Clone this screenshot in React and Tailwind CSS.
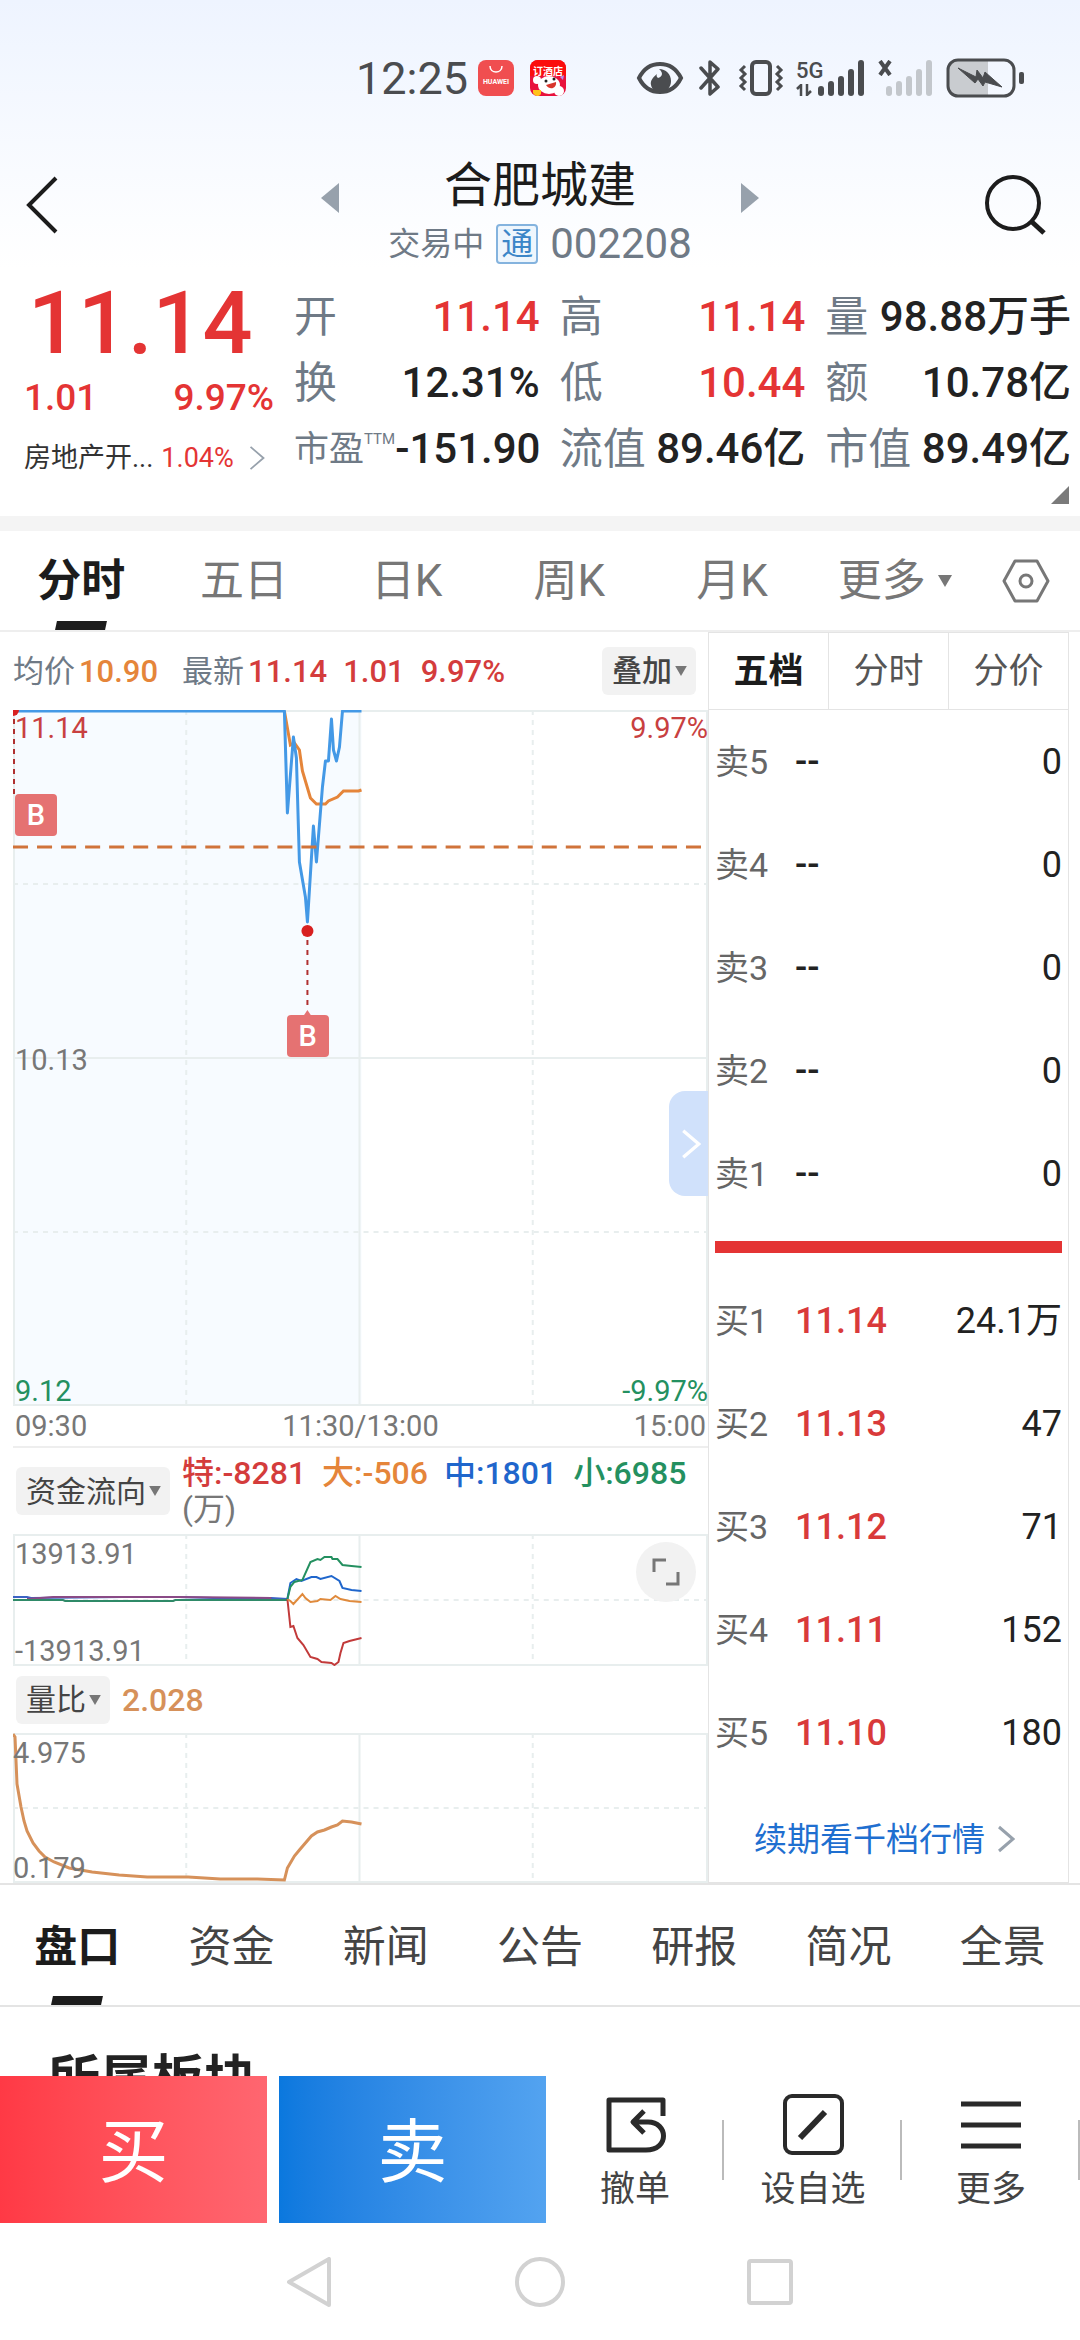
// src/App.jsx

import React, { useState } from 'react';

const RED = 'text-[#e43434]';
const INK = 'text-[#222222]';

const QUOTES = [
  { label: '开', value: '11.14', color: RED },
  { label: '高', value: '11.14', color: RED },
  { label: '量', value: '98.88万手', color: INK },
  { label: '换', value: '12.31%', color: INK },
  { label: '低', value: '10.44', color: RED },
  { label: '额', value: '10.78亿', color: INK },
  { label: '市盈', sup: 'TTM', value: '-151.90', color: INK },
  { label: '流值', value: '89.46亿', color: INK },
  { label: '市值', value: '89.49亿', color: INK },
];

const SELLS = [5, 4, 3, 2, 1].map((n) => ({ label: `卖${n}`, price: '--', volume: '0' }));

const BUYS = [
  { label: '买1', price: '11.14', volume: '24.1万' },
  { label: '买2', price: '11.13', volume: '47' },
  { label: '买3', price: '11.12', volume: '71' },
  { label: '买4', price: '11.11', volume: '152' },
  { label: '买5', price: '11.10', volume: '180' },
];

const PERIODS = ['分时', '五日', '日K', '周K', '月K'];
const BOOK_TABS = ['五档', '分时', '分价'];
const INFO_TABS = ['盘口', '资金', '新闻', '公告', '研报', '简况', '全景'];

const PRICE_LINE =
  '0,1 271,1 274,103 280,27 283,48 286,152 292,187 294,212 300,116 303,152 309,77 312,51 315,51 318,9 320,40 323,51 326,37 329,1 348,1';
const AVG_LINE =
  '271,1 277,35 281,33 286,40 289,61 297,88 303,94 312,94 315,91 324,87 330,81 345,81 348,80';

const FLOW_LINES = [
  { color: '#3b62c4', points: '0,63 14,63 18,64 110,63 165,63 200,64 258,64 274,65' },
  { color: '#8a4a86', points: '14,65 40,63 165,63 258,64' },
  { color: '#2f8a68', points: '0,66 50,66 52,67 160,67 162,66 274,66' },
  { color: '#c23a3a', points: '274,65 277,93 280,92 284,104 290,111 297,123 304,125 308,128 318,129 321,131 325,128 327,119 330,109 336,107 348,104' },
  { color: '#e08a3c', points: '274,65 277,67 280,70 289,60 292,64 297,68 304,67 307,65 317,66 322,62 327,65 336,67 348,68' },
  { color: '#1f66cc', points: '274,65 277,49 283,45 288,47 298,43 303,43 307,45 318,42 326,47 329,54 338,56 348,57' },
  { color: '#249060', points: '274,65 277,53 281,48 289,46 297,28 304,25 307,26 311,23 318,23 319,25 324,25 329,31 338,32 348,33' },
];

const RATIO_LINE =
  '0,1 2,4 4,51 8,74 11,88 14,98 20,110 26,118 32,124 41,129 56,135 79,139 106,142 134,144 159,144 175,144 207,146 244,146 271,147 274,135 281,123 286,117 298,103 304,99 311,97 318,94 324,92 329,88 338,89 348,91';

function Caret({ className }) {
  return (
    <svg viewBox="0 0 14 12" className={className} aria-hidden="true">
      <path d="M0 0h14L7 12z" fill="currentColor" />
    </svg>
  );
}

function Chevron({ className, width = 2 }) {
  return (
    <svg viewBox="0 0 18 26" fill="none" stroke="currentColor" strokeWidth={width} className={className} aria-hidden="true">
      <path d="M2 1l14 12L2 25" />
    </svg>
  );
}

function Picker({ label, options }) {
  return (
    <label className="relative flex h-12 shrink-0 items-center rounded-md bg-[#f2f2f2] text-[#444444]">
      <select aria-label={label} className="h-full appearance-none bg-transparent pl-2.5 pr-6 text-[30px]">
        {options.map((o) => (
          <option key={o}>{o}</option>
        ))}
      </select>
      <Caret className="pointer-events-none absolute right-2 h-2.5 w-3.5 text-[#777777]" />
    </label>
  );
}

function Signal({ className }) {
  return (
    <svg viewBox="0 0 46 36" className={className} fill="currentColor" aria-hidden="true">
      <rect x="0" y="26" width="6" height="10" rx="3" />
      <rect x="10" y="21" width="6" height="15" rx="3" />
      <rect x="20" y="16" width="6" height="20" rx="3" />
      <rect x="30" y="9" width="6" height="27" rx="3" />
      <rect x="40" y="0" width="6" height="36" rx="3" />
    </svg>
  );
}

function StatusBar() {
  return (
    <div className="flex h-[156px] items-center justify-end pr-[54px] text-[#4a4c4f]">
      <span className="mr-2.5 text-[45px] leading-none">12:25</span>
      <svg viewBox="0 0 36 36" className="mr-4 size-9" aria-hidden="true">
        <rect width="36" height="36" rx="8" fill="#f04e50" />
        <path d="M12 6c0 8 12 8 12 0" fill="none" stroke="#fff" strokeWidth="1.5" />
        <text x="18" y="24" textAnchor="middle" fontSize="7" fontWeight="700" fill="#fff">HUAWEI</text>
      </svg>
      <svg viewBox="0 0 36 36" className="mr-[70px] size-9" aria-hidden="true">
        <rect width="36" height="36" rx="8" fill="#e8123c" />
        <path d="M0 8a8 8 0 018-8h20a8 8 0 018 8v8H0z" fill="#fb0d0d" />
        <text x="18" y="15" textAnchor="middle" fontSize="10" fontWeight="700" fill="#fff">订酒店</text>
        <ellipse cx="19" cy="25" rx="11" ry="9" fill="#fff" />
        <circle cx="7" cy="20" r="4" fill="#fff" />
        <circle cx="29" cy="31" r="5" fill="#fff" />
        <path d="M16 25l10-3c1 6-6 9-10 3z" fill="#d9352c" />
        <circle cx="16" cy="21" r="1.5" fill="#222" />
        <circle cx="24" cy="19" r="1.5" fill="#222" />
        <path d="M3 30h8v4a4 4 0 01-4 2 6 6 0 01-4-3z" fill="#ffc21a" />
        <path d="M30 17l4-2-1 5z" fill="#b58cf0" />
      </svg>
      <svg viewBox="0 0 48 34" className="mr-3.5 h-[34px] w-12" fill="none" aria-hidden="true">
        <path d="M3 17C8 7 15 3 24 3s16 4 21 14c-5 10-12 14-21 14S8 27 3 17z" stroke="currentColor" strokeWidth="4" />
        <path d="M23 8c5 4 3 8-1 9-1-1-2-2-1-4-4 3-7 7-6 11 1 5 5 7 10 7 6 0 10-5 10-11 0-7-5-12-12-12z" fill="currentColor" />
      </svg>
      <svg viewBox="0 0 24 36" className="mr-4 h-9 w-6" fill="none" stroke="currentColor" strokeWidth="3.5" strokeLinejoin="round" strokeLinecap="round" aria-hidden="true">
        <path d="M3 8l17 19-8 7V2l8 7L3 28" />
      </svg>
      <svg viewBox="0 0 46 36" className="mr-3 h-9 w-[46px]" fill="none" stroke="currentColor" aria-hidden="true">
        <rect x="14" y="2" width="18" height="32" rx="4" strokeWidth="4" />
        <path d="M7 6L3 10l4 4-4 4 4 4-4 4 4 4M39 6l4 4-4 4 4 4-4 4 4 4-4 4" strokeWidth="3" />
      </svg>
      <span className="relative mr-3.5 flex h-9 w-[68px] justify-end">
        <span className="absolute left-0 top-0 text-[22px] font-medium leading-none">5G</span>
        <svg viewBox="0 0 16 12" className="absolute bottom-0 left-0 h-3 w-4" fill="none" stroke="currentColor" strokeWidth="2.5" aria-hidden="true">
          <path d="M1 5l4-4v11M11 0v11l4-4" />
        </svg>
        <Signal className="h-9 w-[46px]" />
      </span>
      <span className="relative mr-3.5 flex h-9 w-[54px] justify-end">
        <svg viewBox="0 0 14 16" className="absolute left-0 top-0 h-4 w-3.5" stroke="currentColor" strokeWidth="4" aria-hidden="true">
          <path d="M2 1l10 14M12 1L2 15" />
        </svg>
        <Signal className="h-9 w-[46px] text-[#c3c7cc]" />
      </span>
      <svg viewBox="0 0 80 40" className="h-10 w-20" aria-hidden="true">
        <path d="M12 3h30v34H12a9 9 0 01-9-9V12a9 9 0 019-9z" fill="#c9ccd0" />
        <rect x="2" y="2" width="66" height="36" rx="10" fill="none" stroke="currentColor" strokeWidth="3" />
        <rect x="73" y="14" width="5" height="12" rx="2" fill="currentColor" />
        <path d="M12 10l18 9 1-7 6 8 2-6 17 15-17-5-2 4-5-7-3 4z" fill="currentColor" stroke="currentColor" strokeLinejoin="round" />
      </svg>
    </div>
  );
}

function Header() {
  return (
    <header className="grid h-28 grid-cols-[1fr_438px_1fr] items-start px-6">
      <button aria-label="返回" className="mt-5 justify-self-start text-[#1c1c1c]">
        <svg viewBox="0 0 34 58" className="h-[58px] w-[34px]" fill="none" stroke="currentColor" strokeWidth="4" aria-hidden="true">
          <path d="M32 2L5 29l27 27" />
        </svg>
      </button>
      <div className="flex items-start justify-between">
        <button aria-label="上一只" className="mt-[27px] text-[#97a1ac]">
          <svg viewBox="0 0 18 30" className="h-[30px] w-[18px]" fill="currentColor" aria-hidden="true"><path d="M18 0v30L0 15z" /></svg>
        </button>
        <div className="flex flex-col items-center">
          <h1 className="h-[66px] text-[48px] leading-[60px] text-[#1c1c1c]">合肥城建</h1>
          <p className="flex h-11 items-center gap-3 leading-none text-[#6f7a86]">
            <span className="text-[32px]">交易中</span>
            <span className="flex h-10 w-[42px] items-center justify-center rounded-sm border-2 border-[#84b3de] bg-[#eef6fd] text-[32px] text-[#3c86c8]">通</span>
            <span className="text-[42px]">002208</span>
          </p>
        </div>
        <button aria-label="下一只" className="mt-[27px] text-[#97a1ac]">
          <svg viewBox="0 0 18 30" className="h-[30px] w-[18px]" fill="currentColor" aria-hidden="true"><path d="M0 0v30l18-15z" /></svg>
        </button>
      </div>
      <button aria-label="搜索" className="mr-2.5 mt-[18px] justify-self-end text-[#1c1c1c]">
        <svg viewBox="0 0 62 62" className="size-[62px]" fill="none" stroke="currentColor" strokeWidth="4" aria-hidden="true">
          <circle cx="29" cy="29" r="26" />
          <path d="M48 48l12 11" strokeWidth="5" />
        </svg>
      </button>
    </header>
  );
}

function Quote() {
  return (
    <section className="relative flex h-[248px] pr-[9px] pt-4">
      <div className="w-[294px] shrink-0 pl-6 leading-none">
        <p className={`flex h-[78px] items-center pl-1 text-[88px] font-medium ${RED}`}>11.14</p>
        <p className={`flex h-[70px] items-center justify-between pr-5 text-[37px] font-medium ${RED}`}>
          <span>1.01</span>
          <span>9.97%</span>
        </p>
        <a href="#sector" className="flex h-[52px] items-center gap-2 pr-7 text-[27px] text-[#333333]">
          <span>房地产开...</span>
          <span className={RED}>1.04%</span>
          <Chevron className="ml-auto h-6 w-[18px] text-[#97a1ac]" />
        </a>
      </div>
      <dl className="grid flex-1 grid-cols-3 content-start gap-x-5">
        {QUOTES.map((q) => (
          <div key={q.label} className="flex h-[66px] items-center justify-between whitespace-nowrap leading-none">
            <dt className={q.sup ? 'flex text-[35px] text-[#6f7a86]' : 'text-[43px] text-[#6f7a86]'}>
              {q.label}
              {q.sup && <sup className="top-0 self-start text-[15px] leading-none">{q.sup}</sup>}
            </dt>
            <dd className={`text-[42px] font-medium ${q.color}`}>{q.value}</dd>
          </div>
        ))}
      </dl>
      <svg viewBox="0 0 18 18" className="absolute bottom-3 right-[11px] size-[18px]" aria-hidden="true">
        <path d="M18 0v18H0z" fill="#7a7a7a" />
      </svg>
    </section>
  );
}

function Underline() {
  return <span className="absolute bottom-0 h-[9px] w-[50px] -skew-x-12 bg-[#1c1c1c]" />;
}

function PeriodTabs() {
  const [active, setActive] = useState('分时');
  return (
    <nav className="flex h-[101px] border-b-2 border-t border-b-[#eeeeee] border-t-white text-[44px] leading-none text-[#777777]">
      {PERIODS.map((p) => (
        <button
          key={p}
          onClick={() => setActive(p)}
          className={`relative flex flex-1 items-center justify-center ${p === active ? 'font-bold text-[#1c1c1c]' : ''}`}
        >
          {p}
          {p === active && <Underline />}
        </button>
      ))}
      <button className="flex flex-1 items-center justify-center gap-3 pr-2">
        更多
        <Caret className="h-3 w-3.5" />
      </button>
      <button aria-label="设置" className="flex w-24 items-center pl-[18px]">
        <svg viewBox="0 0 48 44" className="h-11 w-12" fill="none" stroke="currentColor" strokeWidth="3" aria-hidden="true">
          <path d="M13 2h22l11 20-11 20H13L2 22z" strokeLinejoin="round" />
          <circle cx="24" cy="22" r="6" />
        </svg>
      </button>
    </nav>
  );
}

// Quarter grid shared by the three charts
function Grid({ height, rows }) {
  return (
    <g stroke="#e8eeee" strokeWidth="2" fill="none">
      <path d={`M0 1H694M0 ${height - 1}H694M1 0V${height}M346 0V${height}M693 0V${height}`} />
      <path d={`M173 0V${height}M519 0V${height}`} strokeDasharray="5 5" />
      {rows.map((y) => (
        <path key={y} d={`M0 ${y}H694`} strokeDasharray="5 5" />
      ))}
    </g>
  );
}

function PriceChart() {
  return (
    <div className="relative h-[696px] text-[29px] leading-none">
      <svg viewBox="0 0 694 696" preserveAspectRatio="none" className="size-full" role="img" aria-label="分时走势">
        <polygon points={`${PRICE_LINE} 348,696 0,696`} fill="#f7fbff" />
        <Grid height={696} rows={[174, 522]} />
        <path d="M0 348H694" stroke="#e8eeee" strokeWidth="2" />
        <polyline points={AVG_LINE} fill="none" stroke="#e5853a" strokeWidth="3" />
        <polyline points={PRICE_LINE} fill="none" stroke="#4499e6" strokeWidth="3" strokeLinejoin="round" />
        <path d="M0 137H694" stroke="#d0733a" strokeWidth="3" strokeDasharray="15 9" />
        <path d="M0 0h6a6 6 0 01-6 6z" fill="#d82020" />
        <path d="M1 9V84M294 230V296" stroke="#b03030" strokeWidth="2" strokeDasharray="5 5" />
        <circle cx="294" cy="221" r="6" fill="#d82020" />
        <path d="M290 306l4-6 4 6z" fill="#e57272" />
      </svg>
      <span className="absolute left-0.5 top-1 text-[#c84040]">11.14</span>
      <span className="absolute right-0 top-1 text-[#c84040]">9.97%</span>
      <span className="absolute left-0.5 top-[336px] text-[#777777]">10.13</span>
      <span className="absolute bottom-0 left-0.5 text-[#249060]">9.12</span>
      <span className="absolute bottom-0 right-0 text-[#249060]">-9.97%</span>
      <span className="absolute left-0.5 top-[84px] flex size-[42px] items-center justify-center rounded bg-[#e57272] font-medium text-white">B</span>
      <span className="absolute left-[42.4%] top-[305px] flex size-[42px] -translate-x-1/2 items-center justify-center rounded bg-[#e57272] font-medium text-white">B</span>
      <button aria-label="收起盘口" className="absolute right-0 top-[381px] flex h-[105px] w-[39px] items-center justify-center rounded-l-2xl bg-[#d0e1fb] text-white">
        <Chevron className="ml-1 h-8 w-5" width={3} />
      </button>
    </div>
  );
}

function Charts() {
  return (
    <div className="min-w-0 flex-1 pl-[13px]">
      <div className="flex h-[78px] items-center pr-3 text-[31px] font-medium leading-none text-[#d43c3c]">
        <span className="font-normal text-[#6f7a86]">均价</span>
        <span className="ml-1 mr-6 text-[#e5853a]">10.90</span>
        <span className="font-normal text-[#6f7a86]">最新</span>
        <span className="ml-1 mr-4">11.14</span>
        <span className="mr-4">1.01</span>
        <span className="mr-auto">9.97%</span>
        <Picker label="叠加" options={['叠加']} />
      </div>
      <PriceChart />
      <div className="grid h-[42px] grid-cols-3 items-center border-b-2 border-[#eeeeee] px-0.5 text-[29px] leading-none text-[#777777]">
        <span>09:30</span>
        <span className="text-center">11:30/13:00</span>
        <span className="text-right">15:00</span>
      </div>

      <div className="flex h-[86px] items-center gap-3 pl-[3px]">
        <Picker label="指标" options={['资金流向']} />
        <p className="flex flex-wrap gap-x-4 whitespace-nowrap text-[32px] font-medium leading-9">
          <span className="text-[#d43c3c]">特:-8281</span>
          <span className="text-[#e5853a]">大:-506</span>
          <span className="text-[#1f66cc]">中:1801</span>
          <span className="text-[#249060]">小:6985</span>
          <span className="font-normal text-[#777777]">(万)</span>
        </p>
      </div>
      <div className="relative h-[132px] text-[29px] leading-none text-[#777777]">
        <svg viewBox="0 0 694 132" preserveAspectRatio="none" className="size-full" role="img" aria-label="资金流向">
          <Grid height={132} rows={[66]} />
          {FLOW_LINES.map((l) => (
            <polyline key={l.points} points={l.points} fill="none" stroke={l.color} strokeWidth="2" />
          ))}
        </svg>
        <span className="absolute left-0.5 top-1.5">13913.91</span>
        <span className="absolute bottom-0 left-0.5">-13913.91</span>
        <button aria-label="全屏" className="absolute right-3 top-2 flex size-[60px] items-center justify-center rounded-full bg-[#f2f2f2]">
          <svg viewBox="0 0 28 28" className="size-7" fill="none" stroke="currentColor" strokeWidth="3" aria-hidden="true">
            <path d="M2 14V2h12M26 14v12H14" />
          </svg>
        </button>
      </div>

      <div className="flex h-[67px] items-center gap-3 pl-[3px]">
        <Picker label="副图指标" options={['量比']} />
        <span className="text-[32px] font-medium leading-none text-[#d6915a]">2.028</span>
      </div>
      <div className="relative h-[150px] text-[29px] leading-none text-[#777777]">
        <svg viewBox="0 0 694 150" preserveAspectRatio="none" className="size-full" role="img" aria-label="量比">
          <Grid height={150} rows={[75]} />
          <polyline points={RATIO_LINE} fill="none" stroke="#d6915a" strokeWidth="3" />
        </svg>
        <span className="absolute left-0 top-1.5">4.975</span>
        <span className="absolute bottom-0 left-0">0.179</span>
      </div>
    </div>
  );
}

function Levels({ label, rows, priceClass }) {
  return (
    <table aria-label={label} className="w-full leading-none">
      <tbody>
        {rows.map((r) => (
          <tr key={r.label} className="h-[103px]">
            <th scope="row" className="w-20 text-left text-[34px] font-normal text-[#666666]">{r.label}</th>
            <td className={`text-[36px] font-medium ${priceClass}`}>{r.price}</td>
            <td className="text-right text-[36px] text-[#222222]">{r.volume}</td>
          </tr>
        ))}
      </tbody>
    </table>
  );
}

function OrderBook() {
  const [tab, setTab] = useState(0);
  return (
    <aside className="mr-[11px] w-[361px] shrink-0 border border-[#e4e4e4]">
      <div className="flex h-[77px] border-b border-[#e4e4e4] text-[35px] leading-none text-[#555555]">
        {BOOK_TABS.map((t, i) => (
          <button
            key={t}
            onClick={() => setTab(i)}
            className={`flex-1 border-r border-[#e4e4e4] last:border-r-0 ${i === tab ? 'font-bold text-[#1c1c1c]' : ''}`}
          >
            {t}
          </button>
        ))}
      </div>
      <div className="px-1.5">
        <Levels label="卖盘" rows={SELLS} priceClass="text-[#222222]" />
        <div className="my-4 h-3 bg-[#e43434]" />
        <Levels label="买盘" rows={BUYS} priceClass="text-[#d93a3a]" />
      </div>
      <a href="#level2" className="flex h-[98px] items-center justify-center gap-3 pr-2 pt-3 text-[33px] leading-none text-[#1f6fd0]">
        续期看千档行情
        <Chevron className="h-7 w-[18px] text-[#97a1ac]" width={3} />
      </a>
    </aside>
  );
}

function InfoTabs() {
  const [active, setActive] = useState('盘口');
  return (
    <nav className="grid h-[124px] grid-cols-7 border-y-2 border-[#e4e4e4] text-[43px] leading-none text-[#444444]">
      {INFO_TABS.map((t) => (
        <button
          key={t}
          onClick={() => setActive(t)}
          className={`relative flex items-center justify-center pt-1 ${t === active ? 'font-bold text-[#1c1c1c]' : ''}`}
        >
          {t}
          {t === active && <Underline />}
        </button>
      ))}
    </nav>
  );
}

function Action({ label, children }) {
  return (
    <button className="relative flex flex-1 flex-col items-center pt-4 text-[35px] leading-none text-[#444444]">
      <svg viewBox="0 0 64 64" className="mb-4 size-16 text-[#2a2a2a]" fill="none" stroke="currentColor" strokeWidth="5" aria-hidden="true">
        {children}
      </svg>
      {label}
      <span className="absolute right-0 top-11 h-[60px] w-0.5 bg-[#bbbbbb]" />
    </button>
  );
}

function TradeBar() {
  return (
    <div className="flex h-[147px]">
      <button className="mr-3 flex-[3] bg-linear-to-r from-[#ff3945] to-[#ff6670] pt-1.5 text-[70px] leading-none text-white">买</button>
      <button className="flex-[3] bg-linear-to-r from-[#0a78de] to-[#53a3f0] pt-1.5 text-[70px] leading-none text-white">卖</button>
      <div className="flex flex-[6]">
        <Action label="撤单">
          <path d="M60 24V8H6v50h37c24 0 22-28 2-28H31M41 19L30 30l11 11" strokeWidth="5" strokeLinejoin="round" />
        </Action>
        <Action label="设自选">
          <rect x="4" y="4" width="57" height="57" rx="7" strokeWidth="4" />
          <path d="M19 46l25-26" strokeWidth="6" />
        </Action>
        <Action label="更多">
          <path d="M2 12h60M2 33h60M2 54h60" strokeWidth="5" />
        </Action>
      </div>
    </div>
  );
}

function SystemNav() {
  return (
    <div className="flex h-[117px] items-center justify-center gap-[180px] text-[#d2d2d2]">
      <button aria-label="返回键">
        <svg viewBox="0 0 50 50" className="size-[50px]" fill="none" stroke="currentColor" strokeWidth="4" strokeLinejoin="round" aria-hidden="true"><path d="M44 2v46L4 25z" /></svg>
      </button>
      <button aria-label="主屏幕">
        <svg viewBox="0 0 50 50" className="size-[50px]" fill="none" stroke="currentColor" strokeWidth="4" aria-hidden="true"><circle cx="25" cy="25" r="23" /></svg>
      </button>
      <button aria-label="最近任务">
        <svg viewBox="0 0 50 50" className="size-[50px]" fill="none" stroke="currentColor" strokeWidth="4" aria-hidden="true"><rect x="4" y="4" width="42" height="42" rx="2" /></svg>
      </button>
    </div>
  );
}

export default function App() {
  return (
    <div className="flex h-screen flex-col bg-white font-['Roboto','Noto_Sans_CJK_SC',sans-serif]">
      <div className="shrink-0 bg-linear-to-b from-[#eef4ff] to-white">
        <StatusBar />
        <Header />
      </div>
      <main className="min-h-0 flex-1 overflow-y-auto [scrollbar-width:none]">
        <Quote />
        <div className="h-[15px] bg-[#f4f4f4]" />
        <PeriodTabs />
        <div className="flex">
          <Charts />
          <OrderBook />
        </div>
        <InfoTabs />
        <section className="px-12 pt-10">
          <h2 className="text-[52px] font-bold leading-[68px] text-[#222222]">所属板块</h2>
        </section>
      </main>
      <footer className="shrink-0">
        <TradeBar />
        <SystemNav />
      </footer>
    </div>
  );
}
